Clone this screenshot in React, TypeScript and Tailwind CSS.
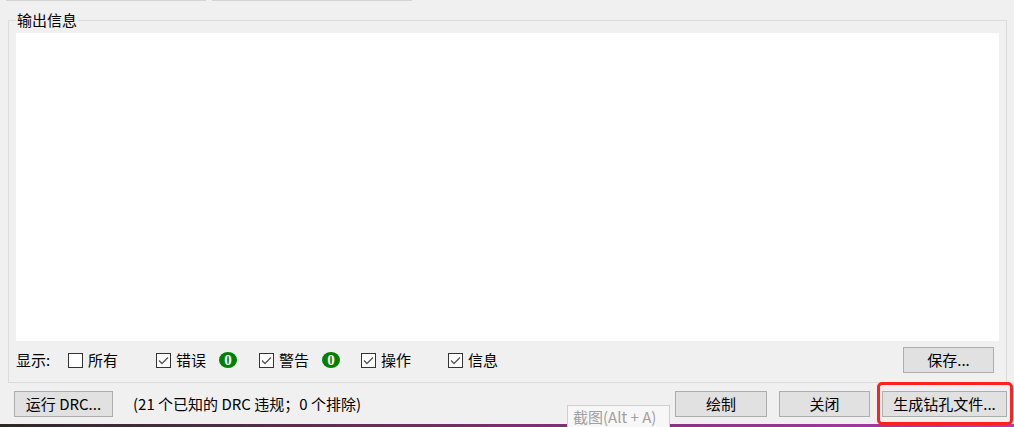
import React from "react";

const font = { fontFamily: '"Microsoft YaHei", "Noto Sans CJK SC", "Noto Sans", sans-serif' };

function Check({ checked }: { checked: boolean }) {
  return (
    <span className="w-[15px] h-[15px] border border-[#333333] bg-white flex items-center justify-center shrink-0">
      {checked && (
        <svg width="11" height="9" viewBox="0 0 11 9">
          <path d="M1 4.5 L4 7.5 L10 1.5" fill="none" stroke="#555555" strokeWidth="1.3" />
        </svg>
      )}
    </span>
  );
}

function Badge() {
  return (
    <span
      className="w-[18px] h-[16px] rounded-[50%] bg-[#008000] text-white flex items-center justify-center text-[15px] font-bold leading-none"
      style={{ fontFamily: '"Liberation Serif", serif' }}
    >
      0
    </span>
  );
}

function Btn({ w, children }: { w: string; children: React.ReactNode }) {
  return (
    <div
      className={`${w} h-[26px] bg-[#e1e1e1] border border-[#adadad] flex items-center justify-center text-[15px] text-black shrink-0`}
    >
      {children}
    </div>
  );
}

export default function App() {
  return (
    <div className="relative w-[1014px] h-[427px] bg-[#f0f0f0] overflow-hidden flex flex-col text-black" style={font}>
      {/* edges of the controls above */}
      <div className="flex h-px">
        <div className="ml-[6px] w-[200px] bg-[#d4d4d4]" />
        <div className="ml-[6px] w-[200px] bg-[#d4d4d4]" />
      </div>

      <fieldset className="mt-[11px] ml-[8px] w-[999px] border border-[#dcdcdc] pl-[7px] pr-[7px] pb-[9px]">
        <legend className="px-px text-[15px] leading-[16px]">输出信息</legend>
        <div className="mt-[5px] h-[308px] bg-white" />
        <div className="mt-[6px] h-[26px] flex items-center text-[15px]">
          <div className="w-[52px]">显示:</div>
          <div className="w-[88px] flex items-center gap-[5px]">
            <Check checked={false} />
            <span>所有</span>
          </div>
          <div className="w-[103px] flex items-center">
            <Check checked />
            <span className="ml-[5px]">错误</span>
            <span className="ml-[13px]">
              <Badge />
            </span>
          </div>
          <div className="w-[102px] flex items-center">
            <Check checked />
            <span className="ml-[5px]">警告</span>
            <span className="ml-[13px]">
              <Badge />
            </span>
          </div>
          <div className="w-[87px] flex items-center gap-[5px]">
            <Check checked />
            <span>操作</span>
          </div>
          <div className="flex items-center gap-[5px]">
            <Check checked />
            <span>信息</span>
          </div>
          <div className="ml-auto mr-[5px]">
            <Btn w="w-[91px]">保存...</Btn>
          </div>
        </div>
      </fieldset>

      <div className="mt-[8px] flex items-center pl-[14px] text-[15px]">
        <Btn w="w-[99px]">运行 DRC...</Btn>
        <span className="ml-[20px]">(21 个已知的 DRC 违规；0 个排除)</span>
        <div className="ml-auto flex gap-[12px] pr-[7px]">
          <Btn w="w-[92px]">绘制</Btn>
          <Btn w="w-[91px]">关闭</Btn>
          <Btn w="w-[125px]">生成钻孔文件...</Btn>
        </div>
      </div>

      <div className="mt-auto h-[3px] bg-gradient-to-r from-[#2e2626] via-[#7a2e6e] to-[#b03cb0]" />

      {/* screenshot tool tooltip */}
      <div className="absolute left-[567px] top-[405px] w-[103px] h-[26px] bg-[#f7f7f7] border border-[#cfcfcf] pl-[5px] text-[15px] leading-[22px] text-[#a0a0a0] whitespace-nowrap">
        截图(Alt + A)
      </div>

      {/* red highlight */}
      <div className="absolute left-[877px] top-[382px] w-[136px] h-[43px] border-[3px] border-[#ff2020] rounded-[5px]" />
    </div>
  );
}
